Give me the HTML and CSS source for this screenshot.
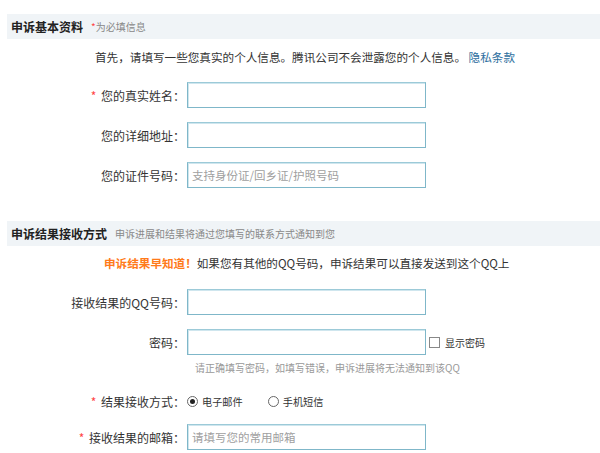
FILE: index.html
```html
<!DOCTYPE html>
<html lang="zh-CN">
<head>
<meta charset="utf-8">
<title>申诉</title>
<link rel="stylesheet" href="styles.css">
</head>
<body>
<div class="page">
  <div class="sec-head">
    <span class="sec-title">申诉基本资料</span>
    <span class="sec-note"><span class="req">*</span>为必填信息</span>
  </div>
  <p class="intro">首先，请填写一些您真实的个人信息。腾讯公司不会泄露您的个人信息。 <a class="link" href="#">隐私条款</a></p>

  <div class="row row-first">
    <label class="lbl"><span class="req">*</span> 您的真实姓名：</label>
    <div class="field"></div>
  </div>
  <div class="row">
    <label class="lbl">您的详细地址：</label>
    <div class="field"></div>
  </div>
  <div class="row">
    <label class="lbl">您的证件号码：</label>
    <div class="field"><span class="ph">支持身份证/回乡证/护照号码</span></div>
  </div>

  <div class="sec-head sec-head2">
    <span class="sec-title">申诉结果接收方式</span>
    <span class="sec-note">申诉进展和结果将通过您填写的联系方式通知到您</span>
  </div>
  <p class="notice"><span class="orange">申诉结果早知道！</span>如果您有其他的QQ号码，申诉结果可以直接发送到这个QQ上</p>

  <div class="row row-qq">
    <label class="lbl">接收结果的QQ号码：</label>
    <div class="field"></div>
  </div>
  <div class="row">
    <label class="lbl">密码：</label>
    <div class="field"></div>
    <span class="check"><span class="box"></span>显示密码</span>
  </div>
  <p class="hint">请正确填写密码，如填写错误，申诉进展将无法通知到该QQ</p>

  <div class="row row-radio">
    <label class="lbl"><span class="req">*</span> 结果接收方式：</label>
    <span class="radio on"><span class="dot"></span>电子邮件</span>
    <span class="radio"><span class="dot"></span>手机短信</span>
  </div>
  <div class="row row-mail">
    <label class="lbl"><span class="req">*</span> 接收结果的邮箱：</label>
    <div class="field"><span class="ph">请填写您的常用邮箱</span></div>
  </div>
</div>
</body>
</html>
```

FILE: styles.css
```css
html, body {
  margin: 0;
  padding: 0;
  background: #fff;
}
body {
  font-family: "Noto Sans CJK SC", "Noto Sans", "Liberation Sans", sans-serif;
  font-size: 11.6px;
  color: #333;
}
.page {
  padding: 14px 0 0 7px;
}
.sec-head {
  height: 25px;
  background: #f0f4f7;
  padding-left: 4px;
  display: flex;
  align-items: center;
}
.sec-title {
  font-weight: bold;
  font-size: 12px;
  color: #222;
}
.sec-note {
  font-size: 10px;
  color: #888;
  margin-left: 8px;
}
.req {
  color: #f44;
}
.intro {
  margin: 8px 0 0;
  line-height: 20px;
  padding-left: 88px;
}
.link {
  color: #2d6e9e;
  text-decoration: none;
}
.row {
  display: flex;
  align-items: center;
  height: 26px;
  margin-top: 14px;
}
.row-first { margin-top: 15px; }
.lbl {
  width: 178px;
  padding-right: 2px;
  text-align: right;
  flex: none;
  font-size: 12px;
}
.lbl .req {
  font-size: 12px;
  margin-right: 2px;
}
.field {
  width: 239px;
  height: 26px;
  box-sizing: border-box;
  border: 1px solid #7fb7c9;
  border-top-color: #9ccad8;
  box-shadow: inset 1px 1px 0 #cfe6ee;
  display: flex;
  align-items: center;
  padding-left: 4px;
  flex: none;
}
.ph {
  color: #a0a0a0;
  font-size: 11.5px;
}
.sec-head2 {
  margin-top: 33px;
}
.notice {
  margin: 7px 0 0;
  line-height: 20px;
  padding-left: 97px;
}
.orange {
  color: #ff7a1a;
  font-weight: bold;
}
.row-qq { margin-top: 16px; }
.check {
  display: flex;
  align-items: center;
  font-size: 10px;
  margin-left: 3px;
  color: #333;
}
.box {
  width: 9px;
  height: 9px;
  border: 1px solid #888;
  margin-right: 5px;
  background: #fff;
}
.hint {
  margin: 6px 0 0;
  line-height: 14px;
  font-size: 10px;
  color: #999;
  padding-left: 188px;
}
.row-radio { margin-top: 13px; }
.radio {
  display: flex;
  align-items: center;
  font-size: 10.2px;
  margin-right: 25px;
}
.dot {
  width: 11px;
  height: 11px;
  border: 1px solid #666;
  border-radius: 50%;
  box-sizing: border-box;
  margin-right: 4px;
  display: flex;
  align-items: center;
  justify-content: center;
  background: #fff;
}
.radio.on .dot::after {
  content: "";
  width: 5px;
  height: 5px;
  border-radius: 50%;
  background: #222;
}
.row-mail { margin-top: 10px; }
```
